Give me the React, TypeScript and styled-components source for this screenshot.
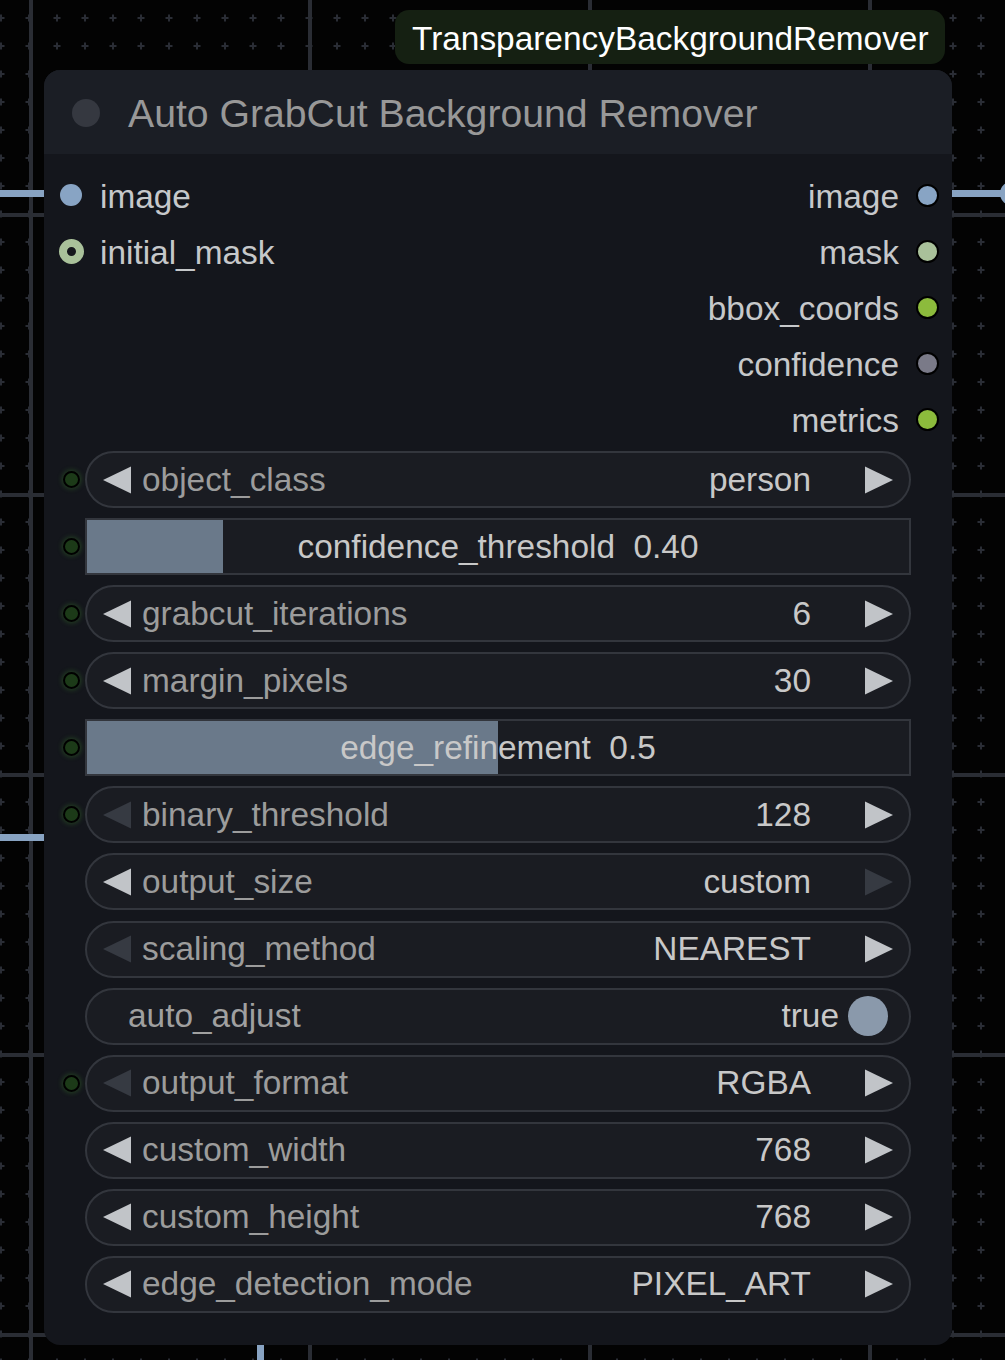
import React from "react";
import styled, { createGlobalStyle } from "styled-components";

const GlobalStyle = createGlobalStyle`
  html, body { margin: 0; padding: 0; background: #030303; }
  body { font-family: "Liberation Sans", Arial, sans-serif; }
  * { box-sizing: border-box; }
`;

const Canvas = styled.div`
  position: relative;
  width: 1005px;
  height: 1360px;
  overflow: hidden;
  background: #030303;
  font-family: "Liberation Sans", Arial, sans-serif;
`;

const Backdrop = styled.svg`
  position: absolute;
  left: 0;
  top: 0;
`;

const Badge = styled.div`
  position: absolute;
  left: 395px;
  top: 10px;
  height: 54px;
  padding: 3px 16px 0 17px;
  border-radius: 14px;
  background: #152012;
  color: #ffffff;
  font-size: 33.4px;
  display: flex;
  align-items: center;
  white-space: nowrap;
`;

const Node = styled.div`
  position: absolute;
  left: 44px;
  top: 70px;
  width: 908px;
  height: 1275px;
  background: #14161c;
  border-radius: 16px;
  overflow: hidden;
  display: flex;
  flex-direction: column;
`;

const TitleBar = styled.div`
  height: 84px;
  flex: none;
  background: #1b1e25;
  display: flex;
  align-items: center;
  padding: 2px 0 0 28px;
  gap: 28px;
`;

const TitleDot = styled.div`
  width: 28px;
  height: 28px;
  border-radius: 50%;
  background: #353840;
`;

const TitleText = styled.div`
  color: #989898;
  font-size: 39.2px;
  white-space: nowrap;
  padding-top: 2px;
`;

const Slots = styled.div`
  display: flex;
  justify-content: space-between;
  padding-top: 13px;
`;

const SlotColumn = styled.div`
  display: flex;
  flex-direction: column;
`;

const SlotRow = styled.div<{ $side: "in" | "out" }>`
  height: 56px;
  display: flex;
  align-items: center;
  flex-direction: ${(p) => (p.$side === "in" ? "row" : "row-reverse")};
  padding: ${(p) => (p.$side === "in" ? "0 0 0 16px" : "0 13px 0 0")};
  gap: ${(p) => (p.$side === "in" ? "18px" : "17px")};
`;

const SlotLabel = styled.span`
  color: #c6c8ca;
  font-size: 33.4px;
  white-space: nowrap;
  padding-top: 4px;
`;

const InDot = styled.div<{ $color: string; $hollow?: boolean }>`
  width: ${(p) => (p.$hollow ? 25 : 22)}px;
  height: ${(p) => (p.$hollow ? 25 : 22)}px;
  margin-left: ${(p) => (p.$hollow ? -1 : 0)}px;
  margin-right: ${(p) => (p.$hollow ? -2 : 0)}px;
  border-radius: 50%;
  background: ${(p) => (p.$hollow ? "#15171c" : p.$color)};
  border: ${(p) => (p.$hollow ? `8px solid ${p.$color}` : "none")};
`;

const OutDot = styled.div<{ $color: string }>`
  width: 23px;
  height: 23px;
  border-radius: 50%;
  background: ${(p) => p.$color};
  border: 2.5px solid #000;
`;

const Widgets = styled.div`
  display: flex;
  flex-direction: column;
  gap: 11.08px;
  padding-top: 4px;
`;

const WidgetRow = styled.div`
  display: grid;
  grid-template-columns: 41px 826px 41px;
  align-items: center;
  height: 56px;
`;

const InputDot = styled.div`
  width: 17px;
  height: 17px;
  margin-left: 19px;
  border-radius: 50%;
  background: #1c3a18;
  border: 2.5px solid #000;
  box-shadow: 0 0 5px 1px rgba(70, 150, 50, 0.35);
`;

const PillBox = styled.div`
  grid-column: 2;
  height: 57px;
  border: 2px solid #33363d;
  border-radius: 28.5px;
  background: #1a1c22;
  display: flex;
  align-items: center;
  font-size: 33.4px;
  white-space: nowrap;
`;

const ComboBox = styled(PillBox)`
  padding: 0 16px;
`;

const ToggleBox = styled(PillBox)`
  padding: 0 21px 0 41px;
`;

const Arrow = styled.svg<{ $off?: boolean }>`
  flex: none;
  fill: ${(p) => (p.$off ? "#363a42" : "#c1c4c8")};
`;

const TextPart = styled.span`
  padding-top: 0;
`;

const WLabel = styled(TextPart)`
  color: #9c9c9c;
  margin-left: 11px;
`;

const WValue = styled(TextPart)`
  color: #c8c8c8;
  margin-left: auto;
  margin-right: 54px;
`;

const ToggleLabel = styled(TextPart)`
  color: #a0a0a0;
`;

const ToggleValue = styled(TextPart)`
  color: #c8c8c8;
  margin-left: auto;
  margin-right: 9px;
`;

const ToggleKnob = styled.div`
  width: 40px;
  height: 40px;
  border-radius: 50%;
  background: #8a99ab;
`;

const SliderBox = styled.div`
  grid-column: 2;
  position: relative;
  height: 57px;
  border: 2px solid #33363d;
  background: #1a1c22;
  display: flex;
  align-items: center;
  justify-content: center;
  gap: 18.5px;
  font-size: 33.4px;
  white-space: nowrap;
  color: #c8c8c8;
`;

const SliderFill = styled.div`
  position: absolute;
  left: 0;
  top: 0;
  bottom: 0;
  background: #6a798a;
`;

const SliderText = styled.span`
  position: relative;
`;

type Widget =
  | { kind: "combo"; name: string; value: string; input?: boolean; leftOff?: boolean; rightOff?: boolean }
  | { kind: "slider"; name: string; value: string; fill: number; input?: boolean }
  | { kind: "toggle"; name: string; value: string; input?: boolean };

const widgets: Widget[] = [
  { kind: "combo", name: "object_class", value: "person", input: true },
  { kind: "slider", name: "confidence_threshold", value: "0.40", fill: 0.1655, input: true },
  { kind: "combo", name: "grabcut_iterations", value: "6", input: true },
  { kind: "combo", name: "margin_pixels", value: "30", input: true },
  { kind: "slider", name: "edge_refinement", value: "0.5", fill: 0.5, input: true },
  { kind: "combo", name: "binary_threshold", value: "128", input: true, leftOff: true },
  { kind: "combo", name: "output_size", value: "custom", rightOff: true },
  { kind: "combo", name: "scaling_method", value: "NEAREST", leftOff: true },
  { kind: "toggle", name: "auto_adjust", value: "true" },
  { kind: "combo", name: "output_format", value: "RGBA", input: true, leftOff: true },
  { kind: "combo", name: "custom_width", value: "768" },
  { kind: "combo", name: "custom_height", value: "768" },
  { kind: "combo", name: "edge_detection_mode", value: "PIXEL_ART" },
];

const inputs = [
  { name: "image", color: "#88a4c4", hollow: false },
  { name: "initial_mask", color: "#a9c19a", hollow: true },
];

const outputs = [
  { name: "image", color: "#88a4c4" },
  { name: "mask", color: "#a9c19a" },
  { name: "bbox_coords", color: "#8cbb3c" },
  { name: "confidence", color: "#7a7a88" },
  { name: "metrics", color: "#8cbb3c" },
];

const LeftArrow = ({ off }: { off?: boolean }) => (
  <Arrow $off={off} width="28" height="28" viewBox="0 0 28 28">
    <polygon points="0,14 28,0.5 28,27.5" />
  </Arrow>
);

const RightArrow = ({ off }: { off?: boolean }) => (
  <Arrow $off={off} width="28" height="28" viewBox="0 0 28 28">
    <polygon points="28,14 0,0.5 0,27.5" />
  </Arrow>
);

const WidgetView = ({ w }: { w: Widget }) => {
  if (w.kind === "slider") {
    return (
      <SliderBox>
        <SliderFill style={{ width: `${w.fill * 100}%` }} />
        <SliderText>{w.name}</SliderText>
        <SliderText>{w.value}</SliderText>
      </SliderBox>
    );
  }
  if (w.kind === "toggle") {
    return (
      <ToggleBox>
        <ToggleLabel>{w.name}</ToggleLabel>
        <ToggleValue>{w.value}</ToggleValue>
        <ToggleKnob />
      </ToggleBox>
    );
  }
  return (
    <ComboBox>
      <LeftArrow off={w.leftOff} />
      <WLabel>{w.name}</WLabel>
      <WValue>{w.value}</WValue>
      <RightArrow off={w.rightOff} />
    </ComboBox>
  );
};

const vLines = [29, 308, 588, 868];
const hLines = [213, 493, 773, 1053, 1333];

export default function App() {
  return (
    <>
      <GlobalStyle />
      <Canvas>
        <Backdrop width="1005" height="1360" viewBox="0 0 1005 1360">
          <defs>
            <pattern id="plus" x="-13" y="4" width="28" height="28" patternUnits="userSpaceOnUse">
              <rect x="10.5" y="13" width="7" height="2" fill="#2a2d35" />
              <rect x="13" y="10.5" width="2" height="7" fill="#2a2d35" />
            </pattern>
          </defs>
          <rect x="0" y="0" width="1005" height="1360" fill="url(#plus)" />
          {vLines.map((x) => (
            <rect key={`v${x}`} x={x} y="0" width="4" height="1360" fill="#2a2d34" />
          ))}
          {hLines.map((y) => (
            <rect key={`h${y}`} x="0" y={y} width="1005" height="4" fill="#2a2d34" />
          ))}
          <rect x="0" y="190" width="48" height="7" fill="#88a3c2" />
          <rect x="948" y="190" width="60" height="7" fill="#88a3c2" />
          <circle cx="1012" cy="193.5" r="12" fill="#88a3c2" />
          <rect x="0" y="834" width="48" height="7" fill="#88a3c2" />
          <rect x="257" y="1340" width="7" height="20" fill="#88a3c2" />
        </Backdrop>

        <Badge>TransparencyBackgroundRemover</Badge>

        <Node>
          <TitleBar>
            <TitleDot />
            <TitleText>Auto GrabCut Background Remover</TitleText>
          </TitleBar>

          <Slots>
            <SlotColumn>
              {inputs.map((s) => (
                <SlotRow key={s.name} $side="in">
                  <InDot $color={s.color} $hollow={s.hollow} />
                  <SlotLabel>{s.name}</SlotLabel>
                </SlotRow>
              ))}
            </SlotColumn>
            <SlotColumn>
              {outputs.map((s) => (
                <SlotRow key={s.name} $side="out">
                  <OutDot $color={s.color} />
                  <SlotLabel>{s.name}</SlotLabel>
                </SlotRow>
              ))}
            </SlotColumn>
          </Slots>

          <Widgets>
            {widgets.map((w) => (
              <WidgetRow key={w.name}>
                {w.input ? <InputDot /> : <span />}
                <WidgetView w={w} />
              </WidgetRow>
            ))}
          </Widgets>
        </Node>
      </Canvas>
    </>
  );
}
